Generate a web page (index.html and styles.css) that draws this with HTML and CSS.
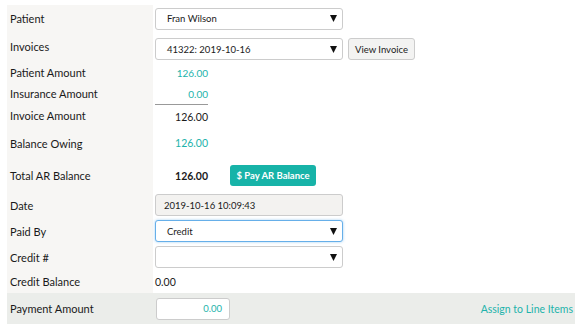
FILE: index.html
```html
<!DOCTYPE html>
<html lang="en">
<head>
  <meta charset="UTF-8">
  <title>Payment</title>
  <link rel="stylesheet" href="styles.css">
</head>
<body>
  <div class="payment-form">
    <div class="row r-patient">
      <div class="label">Patient</div>
      <div class="value">
        <div class="select">Fran Wilson<svg class="caret" width="7" height="7" viewBox="0 0 7 7"><polygon points="0,0 7,0 3.5,7"/></svg></div>
      </div>
    </div>
    <div class="row r-invoices">
      <div class="label">Invoices</div>
      <div class="value">
        <div class="select">41322: 2019-10-16<svg class="caret" width="7" height="7" viewBox="0 0 7 7"><polygon points="0,0 7,0 3.5,7"/></svg></div>
        <button class="btn-default">View Invoice</button>
      </div>
    </div>
    <div class="row r-amount">
      <div class="label">Patient Amount</div>
      <div class="value"><span class="num teal">126.00</span></div>
    </div>
    <div class="row r-amount">
      <div class="label">Insurance Amount</div>
      <div class="value"><span class="num teal">0.00</span></div>
    </div>
    <div class="row r-invoice-amount">
      <div class="label">Invoice Amount</div>
      <div class="value"><span class="num total">126.00</span></div>
    </div>
    <div class="row r-owing">
      <div class="label">Balance Owing</div>
      <div class="value"><span class="num big teal">126.00</span></div>
    </div>
    <div class="row r-ar">
      <div class="label">Total AR Balance</div>
      <div class="value">
        <span class="num big bold">126.00</span>
        <button class="btn-teal">$ Pay AR Balance</button>
      </div>
    </div>
    <div class="row r-field">
      <div class="label">Date</div>
      <div class="value"><div class="input readonly">2019-10-16 10:09:43</div></div>
    </div>
    <div class="row r-field">
      <div class="label">Paid By</div>
      <div class="value">
        <div class="select focus">Credit<svg class="caret" width="7" height="7" viewBox="0 0 7 7"><polygon points="0,0 7,0 3.5,7"/></svg></div>
      </div>
    </div>
    <div class="row r-field">
      <div class="label">Credit #</div>
      <div class="value">
        <div class="select"><svg class="caret" width="7" height="7" viewBox="0 0 7 7"><polygon points="0,0 7,0 3.5,7"/></svg></div>
      </div>
    </div>
    <div class="row r-credit">
      <div class="label">Credit Balance</div>
      <div class="value"><span class="plain">0.00</span></div>
    </div>
    <div class="row r-payment">
      <div class="label">Payment Amount</div>
      <div class="value">
        <div class="input amount">0.00</div>
        <a class="link" href="#">Assign to Line Items</a>
      </div>
    </div>
  </div>
</body>
</html>
```

FILE: styles.css
```css
* {
  box-sizing: border-box;
}
body {
  margin: 0;
  font-family: Lato, 'Liberation Sans', sans-serif;
  color: #1a1a1a;
  background: #fff;
}
.payment-form {
  margin: 5px 6px 0 7px;
}
.row {
  display: grid;
  grid-template-columns: 146px 1fr;
}
.label {
  background: #f7f6f4;
  font-size: 11px;
  padding-left: 3px;
  display: flex;
  align-items: center;
}
.value {
  display: flex;
  align-items: center;
  padding-left: 2px;
  font-size: 10px;
}
.r-patient { height: 26px; }
.r-patient .value { padding-top: 2px; padding-bottom: 1px; }
.r-invoices { height: 31px; }
.r-invoices .value { padding-top: 5px; }
.r-amount { height: 21px; }
.r-invoice-amount { height: 23px; }
.r-owing { height: 32px; }
.r-ar { height: 33px; }
.r-field { height: 26px; }
.r-credit { height: 23px; }
.r-payment { height: 31px; background: #ebedea; }
.r-payment .label { background: transparent; }

.teal {
  color: #1db3ab;
}
.num {
  display: inline-block;
  width: 53px;
  text-align: right;
}
.total {
  font-size: 10.5px;
  border-top: 1px solid #999;
  align-self: stretch;
  display: flex;
  align-items: center;
  justify-content: flex-end;
  padding-top: 1px;
}
.big {
  font-size: 10.5px;
}
.bold {
  font-weight: bold;
}
.plain {
  font-size: 10.5px;
}

.select,
.input {
  width: 188px;
  height: 22px;
  border: 1px solid #ccc;
  border-radius: 3px;
  background: #fff;
  display: flex;
  align-items: center;
  padding: 0 5px 0 11px;
  font-size: 9.5px;
  color: #1a1a1a;
}
.select .caret {
  margin-left: auto;
  fill: #111;
}
.select.focus {
  border-color: #66afe9;
  box-shadow: 0 0 3px rgba(102, 175, 233, 0.6);
}
.input.readonly {
  background: #f3f2f0;
  padding-left: 8px;
}
.input.amount {
  width: 74px;
  margin-left: 1px;
  justify-content: flex-end;
  padding-right: 7px;
  color: #1db3ab;
}

.btn-default {
  margin-left: 5px;
  height: 22px;
  width: 67px;
  padding: 0;
  border: 1px solid #ccc;
  border-radius: 3px;
  background: #f3f3f2;
  font-family: inherit;
  font-size: 9.5px;
  color: #1a1a1a;
}
.btn-teal {
  margin-left: 22px;
  height: 21px;
  width: 86px;
  padding: 0;
  border: none;
  border-radius: 3px;
  background: #17b3a8;
  color: #fff;
  font-family: inherit;
  font-weight: bold;
  font-size: 9.5px;
}
.link {
  margin-left: auto;
  margin-right: 2px;
  color: #1db3ab;
  text-decoration: none;
  font-size: 10.5px;
}
```
